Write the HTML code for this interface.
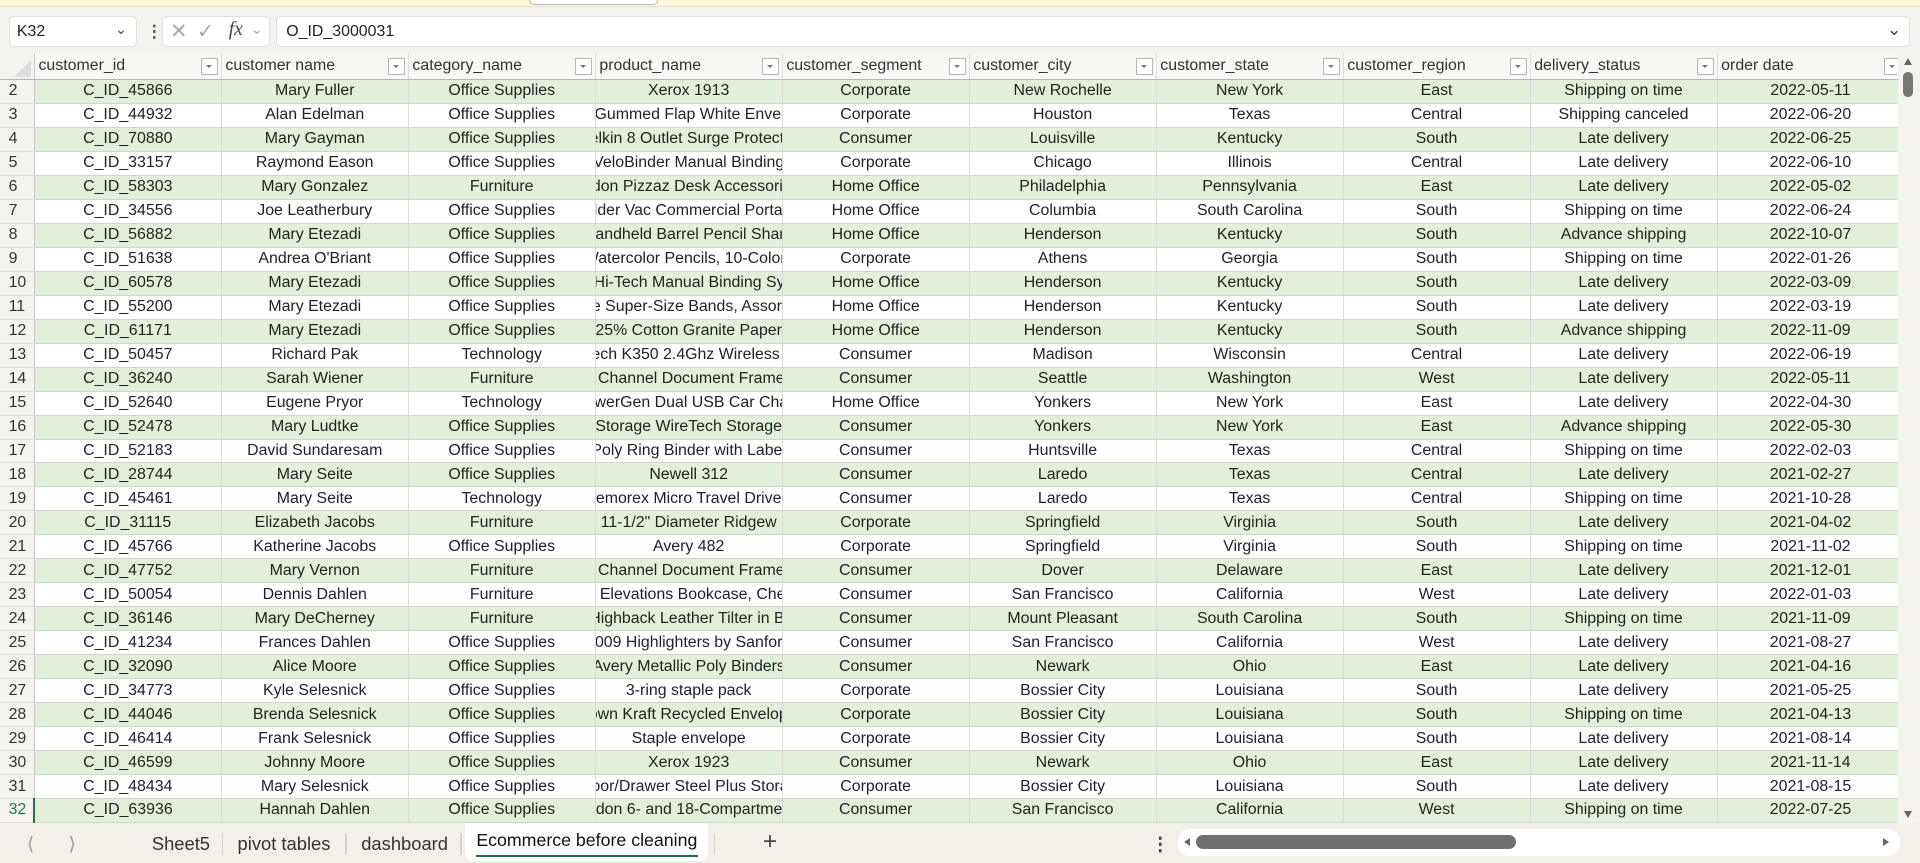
<!DOCTYPE html>
<html><head><meta charset="utf-8"><style>
html,body{margin:0;padding:0;}
body{width:1568px;height:705px;zoom:1.2244898;overflow:hidden;background:#f5f3ef;font-family:"Liberation Sans",Arial,sans-serif;position:relative;color:#222;}
.topbar{position:absolute;left:0;top:0;width:1568px;height:5px;background:#fbf6da;border-bottom:1px solid #e6e0c8;}
.box{position:absolute;background:#fff;border:1px solid #e2e0dc;border-radius:4px;font-size:13px;}
.gridwrap{position:absolute;left:0;top:44px;width:1550px;height:628px;overflow:hidden;}
table{border-collapse:collapse;table-layout:fixed;font-size:13px;width:1555px;}
td{height:18.77px;padding:0;white-space:nowrap;overflow:hidden;border-right:1px solid #dadada;border-bottom:1px solid #c9dcbc;text-align:center;line-height:18px;}
td.rn{background:#f5f3ef;color:#333;text-align:left;padding-left:7px;box-sizing:border-box;border-right:1px solid #c8c8c8;border-bottom:1px solid #e0ded9;}
tr.g td{background:#e2efda;}
tr.g td.rn{background:#f5f3ef;}
tr.w td{background:#fff;}
tr.w td.rn{background:#f5f3ef;}
td .c{display:flex;justify-content:center;width:100%;overflow:hidden;}
td .c span{flex-shrink:0;}
th{height:20.5px;font-weight:normal;text-align:left;padding:0 0 0 3px;font-size:13px;background:#f8f7f4;border-bottom:1px solid #b5b5b5;border-right:1px solid #dedede;position:relative;white-space:nowrap;overflow:hidden;color:#333;}
th .dd{position:absolute;right:2px;top:3px;width:14px;height:14px;border:1px solid #b8b8b8;background:#fff;box-sizing:border-box;}
th .dd:after{content:"";position:absolute;left:3px;top:5px;border-left:3px solid transparent;border-right:3px solid transparent;border-top:3px solid #777;}
.tabs{position:absolute;left:0;top:672px;width:1568px;height:33px;background:#f3f0ea;font-size:15px;color:#333;}
.tab{position:absolute;top:8px;}
.sep{position:absolute;top:8px;width:1px;height:18px;background:#d8d5d0;}
</style></head><body>
<div class="topbar"></div>
<div style="position:absolute;left:432px;top:0;width:104px;height:3px;border:1px solid #bbb;border-top:none;border-radius:0 0 4px 4px;background:#fff"></div>
<div class="box" style="left:7px;top:13px;width:103px;height:24px;"><span style="position:absolute;left:6px;top:5px">K32</span><span style="position:absolute;left:86px;top:3px;font-size:12px;color:#555">&#8964;</span></div>
<div style="position:absolute;left:119px;top:17px;font-size:14px;color:#555;font-weight:bold">&#8942;</div>
<div class="box" style="left:132px;top:13px;width:87px;height:24px;color:#aaa">
<span style="position:absolute;left:6px;top:2px;font-size:17px">&#10005;</span><span style="position:absolute;left:28px;top:2px;font-size:17px">&#10003;</span><span style="position:absolute;left:54px;top:2px;font-size:16px;font-family:'Liberation Serif',serif;font-style:italic;color:#444">fx</span><span style="position:absolute;left:72px;top:3px;font-size:12px">&#8964;</span></div>
<div class="box" style="left:225px;top:13px;width:1333px;height:24px;"><span style="position:absolute;left:8px;top:5px">O_ID_3000031</span><span style="position:absolute;right:6px;top:2px;font-size:14px;color:#444">&#8964;</span></div>

<div class="gridwrap">
<table>
<colgroup><col style="width:28px"><col style="width:152.7px"><col style="width:152.7px"><col style="width:152.7px"><col style="width:152.7px"><col style="width:152.7px"><col style="width:152.7px"><col style="width:152.7px"><col style="width:152.7px"><col style="width:152.7px"><col style="width:152.7px"></colgroup>
<tr><th style="background:#f5f3ef;border-right:1px solid #c8c8c8"><div style="position:absolute;right:2px;bottom:2px;border-left:14px solid transparent;border-bottom:14px solid #ddd"></div></th>
<th>customer_id<span class="dd"></span></th><th>customer name<span class="dd"></span></th><th>category_name<span class="dd"></span></th><th>product_name<span class="dd"></span></th><th>customer_segment<span class="dd"></span></th><th>customer_city<span class="dd"></span></th><th>customer_state<span class="dd"></span></th><th>customer_region<span class="dd"></span></th><th>delivery_status<span class="dd"></span></th><th>order date<span class="dd"></span></th></tr>
<tr class="g"><td class="rn">2</td><td>C_ID_45866</td><td>Mary Fuller</td><td>Office Supplies</td><td><div class="c"><span>Xerox 1913</span></div></td><td>Corporate</td><td>New Rochelle</td><td>New York</td><td>East</td><td>Shipping on time</td><td>2022-05-11</td></tr>
<tr class="w"><td class="rn">3</td><td>C_ID_44932</td><td>Alan Edelman</td><td>Office Supplies</td><td><div class="c"><span>#10- Gummed Flap White Envelopes</span></div></td><td>Corporate</td><td>Houston</td><td>Texas</td><td>Central</td><td>Shipping canceled</td><td>2022-06-20</td></tr>
<tr class="g"><td class="rn">4</td><td>C_ID_70880</td><td>Mary Gayman</td><td>Office Supplies</td><td><div class="c"><span>Belkin 8 Outlet Surge Protector</span></div></td><td>Consumer</td><td>Louisville</td><td>Kentucky</td><td>South</td><td>Late delivery</td><td>2022-06-25</td></tr>
<tr class="w"><td class="rn">5</td><td>C_ID_33157</td><td>Raymond Eason</td><td>Office Supplies</td><td><div class="c"><span>VeloBinder Manual Binding</span></div></td><td>Corporate</td><td>Chicago</td><td>Illinois</td><td>Central</td><td>Late delivery</td><td>2022-06-10</td></tr>
<tr class="g"><td class="rn">6</td><td>C_ID_58303</td><td>Mary Gonzalez</td><td>Furniture</td><td><div class="c"><span>Eldon Pizzaz Desk Accessories</span></div></td><td>Home Office</td><td>Philadelphia</td><td>Pennsylvania</td><td>East</td><td>Late delivery</td><td>2022-05-02</td></tr>
<tr class="w"><td class="rn">7</td><td>C_ID_34556</td><td>Joe Leatherbury</td><td>Office Supplies</td><td><div class="c"><span>Holder Vac Commercial Portable</span></div></td><td>Home Office</td><td>Columbia</td><td>South Carolina</td><td>South</td><td>Shipping on time</td><td>2022-06-24</td></tr>
<tr class="g"><td class="rn">8</td><td>C_ID_56882</td><td>Mary Etezadi</td><td>Office Supplies</td><td><div class="c"><span>Handheld Barrel Pencil Sharp</span></div></td><td>Home Office</td><td>Henderson</td><td>Kentucky</td><td>South</td><td>Advance shipping</td><td>2022-10-07</td></tr>
<tr class="w"><td class="rn">9</td><td>C_ID_51638</td><td>Andrea O'Briant</td><td>Office Supplies</td><td><div class="c"><span>Watercolor Pencils, 10-Colors</span></div></td><td>Corporate</td><td>Athens</td><td>Georgia</td><td>South</td><td>Shipping on time</td><td>2022-01-26</td></tr>
<tr class="g"><td class="rn">10</td><td>C_ID_60578</td><td>Mary Etezadi</td><td>Office Supplies</td><td><div class="c"><span>&nbsp;&nbsp;Hi-Tech Manual Binding Sys</span></div></td><td>Home Office</td><td>Henderson</td><td>Kentucky</td><td>South</td><td>Late delivery</td><td>2022-03-09</td></tr>
<tr class="w"><td class="rn">11</td><td>C_ID_55200</td><td>Mary Etezadi</td><td>Office Supplies</td><td><div class="c"><span>The Super-Size Bands, Assorted</span></div></td><td>Home Office</td><td>Henderson</td><td>Kentucky</td><td>South</td><td>Late delivery</td><td>2022-03-19</td></tr>
<tr class="g"><td class="rn">12</td><td>C_ID_61171</td><td>Mary Etezadi</td><td>Office Supplies</td><td><div class="c"><span>25% Cotton Granite Paper</span></div></td><td>Home Office</td><td>Henderson</td><td>Kentucky</td><td>South</td><td>Advance shipping</td><td>2022-11-09</td></tr>
<tr class="w"><td class="rn">13</td><td>C_ID_50457</td><td>Richard Pak</td><td>Technology</td><td><div class="c"><span>Logitech K350 2.4Ghz Wireless Keyb</span></div></td><td>Consumer</td><td>Madison</td><td>Wisconsin</td><td>Central</td><td>Late delivery</td><td>2022-06-19</td></tr>
<tr class="g"><td class="rn">14</td><td>C_ID_36240</td><td>Sarah Wiener</td><td>Furniture</td><td><div class="c"><span>&nbsp;&nbsp;&nbsp;Channel Document Frames</span></div></td><td>Consumer</td><td>Seattle</td><td>Washington</td><td>West</td><td>Late delivery</td><td>2022-05-11</td></tr>
<tr class="w"><td class="rn">15</td><td>C_ID_52640</td><td>Eugene Pryor</td><td>Technology</td><td><div class="c"><span>PowerGen Dual USB Car Charg</span></div></td><td>Home Office</td><td>Yonkers</td><td>New York</td><td>East</td><td>Late delivery</td><td>2022-04-30</td></tr>
<tr class="g"><td class="rn">16</td><td>C_ID_52478</td><td>Mary Ludtke</td><td>Office Supplies</td><td><div class="c"><span>Storage WireTech Storage</span></div></td><td>Consumer</td><td>Yonkers</td><td>New York</td><td>East</td><td>Advance shipping</td><td>2022-05-30</td></tr>
<tr class="w"><td class="rn">17</td><td>C_ID_52183</td><td>David Sundaresam</td><td>Office Supplies</td><td><div class="c"><span>Poly Ring Binder with Label</span></div></td><td>Consumer</td><td>Huntsville</td><td>Texas</td><td>Central</td><td>Shipping on time</td><td>2022-02-03</td></tr>
<tr class="g"><td class="rn">18</td><td>C_ID_28744</td><td>Mary Seite</td><td>Office Supplies</td><td><div class="c"><span>Newell 312</span></div></td><td>Consumer</td><td>Laredo</td><td>Texas</td><td>Central</td><td>Late delivery</td><td>2021-02-27</td></tr>
<tr class="w"><td class="rn">19</td><td>C_ID_45461</td><td>Mary Seite</td><td>Technology</td><td><div class="c"><span>Memorex Micro Travel Drive 8</span></div></td><td>Consumer</td><td>Laredo</td><td>Texas</td><td>Central</td><td>Shipping on time</td><td>2021-10-28</td></tr>
<tr class="g"><td class="rn">20</td><td>C_ID_31115</td><td>Elizabeth Jacobs</td><td>Furniture</td><td><div class="c"><span>11-1/2" Diameter Ridgew</span></div></td><td>Corporate</td><td>Springfield</td><td>Virginia</td><td>South</td><td>Late delivery</td><td>2021-04-02</td></tr>
<tr class="w"><td class="rn">21</td><td>C_ID_45766</td><td>Katherine Jacobs</td><td>Office Supplies</td><td><div class="c"><span>Avery 482</span></div></td><td>Corporate</td><td>Springfield</td><td>Virginia</td><td>South</td><td>Shipping on time</td><td>2021-11-02</td></tr>
<tr class="g"><td class="rn">22</td><td>C_ID_47752</td><td>Mary Vernon</td><td>Furniture</td><td><div class="c"><span>&nbsp;&nbsp;&nbsp;Channel Document Frames</span></div></td><td>Consumer</td><td>Dover</td><td>Delaware</td><td>East</td><td>Late delivery</td><td>2021-12-01</td></tr>
<tr class="w"><td class="rn">23</td><td>C_ID_50054</td><td>Dennis Dahlen</td><td>Furniture</td><td><div class="c"><span>&nbsp;&nbsp;&nbsp;Elevations Bookcase, Cher</span></div></td><td>Consumer</td><td>San Francisco</td><td>California</td><td>West</td><td>Late delivery</td><td>2022-01-03</td></tr>
<tr class="g"><td class="rn">24</td><td>C_ID_36146</td><td>Mary DeCherney</td><td>Furniture</td><td><div class="c"><span>Highback Leather Tilter in Bl</span></div></td><td>Consumer</td><td>Mount Pleasant</td><td>South Carolina</td><td>South</td><td>Shipping on time</td><td>2021-11-09</td></tr>
<tr class="w"><td class="rn">25</td><td>C_ID_41234</td><td>Frances Dahlen</td><td>Office Supplies</td><td><div class="c"><span>2009 Highlighters by Sanford</span></div></td><td>Consumer</td><td>San Francisco</td><td>California</td><td>West</td><td>Late delivery</td><td>2021-08-27</td></tr>
<tr class="g"><td class="rn">26</td><td>C_ID_32090</td><td>Alice Moore</td><td>Office Supplies</td><td><div class="c"><span>Avery Metallic Poly Binders</span></div></td><td>Consumer</td><td>Newark</td><td>Ohio</td><td>East</td><td>Late delivery</td><td>2021-04-16</td></tr>
<tr class="w"><td class="rn">27</td><td>C_ID_34773</td><td>Kyle Selesnick</td><td>Office Supplies</td><td><div class="c"><span>3-ring staple pack</span></div></td><td>Corporate</td><td>Bossier City</td><td>Louisiana</td><td>South</td><td>Late delivery</td><td>2021-05-25</td></tr>
<tr class="g"><td class="rn">28</td><td>C_ID_44046</td><td>Brenda Selesnick</td><td>Office Supplies</td><td><div class="c"><span>Brown Kraft Recycled Envelopes</span></div></td><td>Corporate</td><td>Bossier City</td><td>Louisiana</td><td>South</td><td>Shipping on time</td><td>2021-04-13</td></tr>
<tr class="w"><td class="rn">29</td><td>C_ID_46414</td><td>Frank Selesnick</td><td>Office Supplies</td><td><div class="c"><span>Staple envelope</span></div></td><td>Corporate</td><td>Bossier City</td><td>Louisiana</td><td>South</td><td>Late delivery</td><td>2021-08-14</td></tr>
<tr class="g"><td class="rn">30</td><td>C_ID_46599</td><td>Johnny Moore</td><td>Office Supplies</td><td><div class="c"><span>Xerox 1923</span></div></td><td>Consumer</td><td>Newark</td><td>Ohio</td><td>East</td><td>Late delivery</td><td>2021-11-14</td></tr>
<tr class="w"><td class="rn">31</td><td>C_ID_48434</td><td>Mary Selesnick</td><td>Office Supplies</td><td><div class="c"><span>Door/Drawer Steel Plus Storag</span></div></td><td>Corporate</td><td>Bossier City</td><td>Louisiana</td><td>South</td><td>Late delivery</td><td>2021-08-15</td></tr>
<tr class="g"><td class="rn" style="color:#217346;border-right:2px solid #217346">32</td><td>C_ID_63936</td><td>Hannah Dahlen</td><td>Office Supplies</td><td><div class="c"><span>Eldon 6- and 18-Compartment</span></div></td><td>Consumer</td><td>San Francisco</td><td>California</td><td>West</td><td>Shipping on time</td><td>2022-07-25</td></tr>
</table>
</div>
<div style="position:absolute;left:1550px;top:44px;width:18px;height:628px;background:#f5f3ef;">
<div style="position:absolute;left:5px;top:3px;border-left:4px solid transparent;border-right:4px solid transparent;border-bottom:6px solid #666"></div>
<div style="position:absolute;left:4px;top:15px;width:8px;height:20px;border-radius:4px;background:#777"></div>
<div style="position:absolute;left:5px;top:618px;border-left:4px solid transparent;border-right:4px solid transparent;border-top:6px solid #666"></div>
</div>
<div class="tabs">
<span class="tab" style="left:22px;color:#999">&#10216;</span>
<span class="tab" style="left:56px;color:#999">&#10217;</span>
<span class="tab" style="left:124px">Sheet5</span>
<div class="sep" style="left:181px"></div>
<span class="tab" style="left:194px">pivot tables</span>
<div class="sep" style="left:282px"></div>
<span class="tab" style="left:295px">dashboard</span>
<div class="sep" style="left:376px"></div>
<div style="position:absolute;left:380px;top:0;width:198px;height:31px;background:#fff;border-radius:0 0 6px 6px;"></div>
<span class="tab" style="left:389px;top:6px;color:#111;font-size:14.5px">Ecommerce before cleaning</span>
<div style="position:absolute;left:389px;top:26px;width:181px;height:2px;background:#1e6b4a"></div>
<div class="sep" style="left:583px"></div>
<span class="tab" style="left:623px;top:4px;font-size:20px;color:#444">+</span>
<span class="tab" style="left:940px;top:8px;font-weight:bold;color:#444">&#8942;</span>
<div style="position:absolute;left:962px;top:5px;width:590px;height:22px;background:#fff;border-radius:10px;"></div>
<div style="position:absolute;left:967px;top:12px;border-top:4px solid transparent;border-bottom:4px solid transparent;border-right:5px solid #666"></div>
<div style="position:absolute;left:977px;top:10px;width:261px;height:11px;border-radius:6px;background:#707070"></div>
<div style="position:absolute;left:1538px;top:12px;border-top:4px solid transparent;border-bottom:4px solid transparent;border-left:5px solid #666"></div>
</div>
</body></html>
